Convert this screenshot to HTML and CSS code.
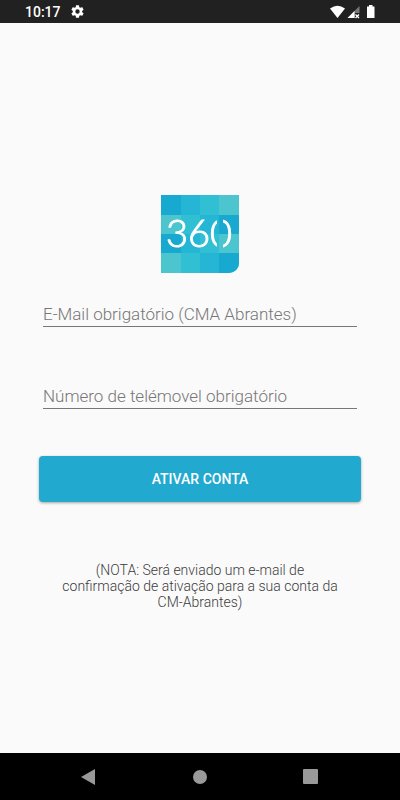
FILE: index.html
```html
<!DOCTYPE html>
<html lang="pt">
<head>
<meta charset="utf-8">
<meta name="viewport" content="width=device-width, initial-scale=1">
<title>Ativar conta</title>
<link rel="stylesheet" href="styles.css">
</head>
<body>
<header class="status">
  <span class="clock">10:17</span>
  <svg class="gear" viewBox="0 0 24 24" aria-hidden="true"><path fill="#fff" d="M19.4 13a7.500 7.500 0 0 0 0-2l2.100-1.650a.5.5 0 0 0 .12-.64l-2-3.460a.5.5 0 0 0-.61-.22l-2.490 1a7.300 7.300 0 0 0-1.690-.98l-.38-2.650A.49.49 0 0 0 14 2h-4a.49.49 0 0 0-.49.42l-.38 2.650c-.61.25-1.170.59-1.690.98l-2.490-1a.49.49 0 0 0-.61.22l-2 3.460a.49.49 0 0 0 .12.64L4.570 11a7.900 7.900 0 0 0 0 2l-2.110 1.650a.5.5 0 0 0-.12.64l2 3.460c.12.22.39.3.61.22l2.490-1c.52.4 1.080.73 1.690.98l.38 2.650c.03.24.24.4.49.4h4c.25 0 .46-.18.49-.42l.38-2.650c.61-.25 1.170-.59 1.690-.98l2.490 1c.23.09.49 0 .61-.22l2-3.460a.5.5 0 0 0-.12-.64zM12 15.500a3.500 3.500 0 1 1 0-7 3.500 3.500 0 0 1 0 7z"/></svg>
  <svg class="signals" viewBox="0 0 46 16" aria-hidden="true">
    <path fill="#fff" d="M0 4.500Q7.500-1 15 4.500L7.500 14z"/>
    <path fill="#777" d="M29.500 2v7H25v5h-7.500z"/>
    <path fill="#fff" d="M24.500 7v7h-7z"/>
    <path stroke="#fff" stroke-width="1.300" d="M25.500 10.500l3.500 3.500m0-3.500L25.500 14"/>
    <path fill="#fff" d="M37 2.500h2V1h3.500v1.500h2V14H37z"/>
  </svg>
</header>
<main class="screen">
  <svg class="logo" viewBox="0 0 78 78" role="img" aria-label="360">
    <defs>
      <clipPath id="tile"><path d="M0 0h78v68a10 10 0 0 1-10 10H0z"/></clipPath>
      <mask id="gap"><path fill="#fff" d="M0 0h78v78H0z"/><path fill="#000" d="M56 20h6v36h-6z"/></mask>
    </defs>
    <g clip-path="url(#tile)">
      <path fill="#31c0d3" d="M0 0h78v78H0z"/>
      <path fill="#17a9cf" d="M0 0h20v20H0zM58 20h20v19H58zM0 39h20v19H0zM58 58h20v20H58z"/>
      <path fill="#25b6d6" d="M20 0h19v20H20zM39 20h19v19H39zM20 39h19v19H20zM39 58h19v20H39z"/>
      <path fill="#4dc5cf" d="M58 0h20v20H58zM0 20h20v19H0zM58 39h20v19H58zM0 58h20v20H0z"/>
    </g>
    <text class="mark" x="38" y="52" text-anchor="middle" mask="url(#gap)">360</text>
  </svg>
  <form class="form">
    <input class="field" type="email" aria-label="E-Mail" placeholder="E-Mail obrigatório (CMA Abrantes)">
    <input class="field" type="tel" aria-label="Número de telémovel" placeholder="Número de telémovel obrigatório">
    <button class="submit" type="submit">ATIVAR CONTA</button>
  </form>
  <p class="note">(NOTA: Será enviado um e-mail de confirmação de ativação para a sua conta da CM-Abrantes)</p>
</main>
<nav class="navbar">
  <button class="key" type="button" aria-label="Voltar"><svg viewBox="0 0 16 16"><path fill="#999" d="M14 0v16L0 8z"/></svg></button>
  <button class="key" type="button" aria-label="Início"><svg viewBox="0 0 16 16"><circle fill="#999" cx="8" cy="8" r="7"/></svg></button>
  <button class="key" type="button" aria-label="Recentes"><svg viewBox="0 0 16 16"><rect fill="#999" width="15" height="15" rx="1"/></svg></button>
</nav>
</body>
</html>
```
FILE: styles.css
```css
* { box-sizing: border-box; }
body {
  margin: 0;
  min-height: 100vh;
  display: flex;
  flex-direction: column;
  background: #fafafa;
  font-family: Roboto, "Liberation Sans", sans-serif;
}
.status {
  display: flex;
  align-items: center;
  height: 23px;
  padding: 0 24px 0 25px;
  background: #212121;
  color: #fff;
}
.clock { font-size: 14px; font-weight: 500; line-height: 24px; }
.gear { width: 15px; height: 15px; margin-left: 9px; }
.signals { width: 46px; height: 16px; margin-left: auto; }
.screen {
  flex: 1;
  display: flex;
  flex-direction: column;
  align-items: center;
  justify-content: center;
  padding: 28px 39px 0;
}
.logo { width: 78px; height: 78px; }
.mark {
  font-family: Lato, sans-serif;
  font-size: 38px;
  font-weight: 300;
  fill: #fff;
  stroke: #fff;
  stroke-width: 1px;
}
.form {
  display: flex;
  flex-direction: column;
  width: 100%;
  margin-top: 24px;
}
.field {
  height: 30px;
  margin: 0 4px 52px;
  padding: 5px 0 0;
  border: 0;
  border-bottom: 1px solid #777;
  border-radius: 0;
  background: transparent;
  color: #212121;
  font-family: inherit;
  font-size: 17px;
  font-weight: 300;
  outline: 0;
}
.field::placeholder { color: #777; opacity: 1; }
.submit {
  height: 46px;
  margin-top: -5px;
  border: 0;
  border-radius: 4px;
  background: #22a9cf;
  box-shadow: 0 1px 3px rgba(0, 0, 0, .35);
  color: #fff;
  font-family: inherit;
  font-size: 14px;
  font-weight: 500;
}
.note {
  margin: 60px 22px 0;
  color: #3c3c3c;
  font-size: 14px;
  font-weight: 300;
  line-height: 16px;
  text-align: center;
}
.navbar {
  display: flex;
  justify-content: center;
  gap: 63px;
  height: 47px;
  background: #000;
}
.key {
  display: flex;
  align-items: center;
  justify-content: center;
  width: 48px;
  padding: 0;
  border: 0;
  background: none;
}
.key svg { width: 16px; height: 16px; }
```
